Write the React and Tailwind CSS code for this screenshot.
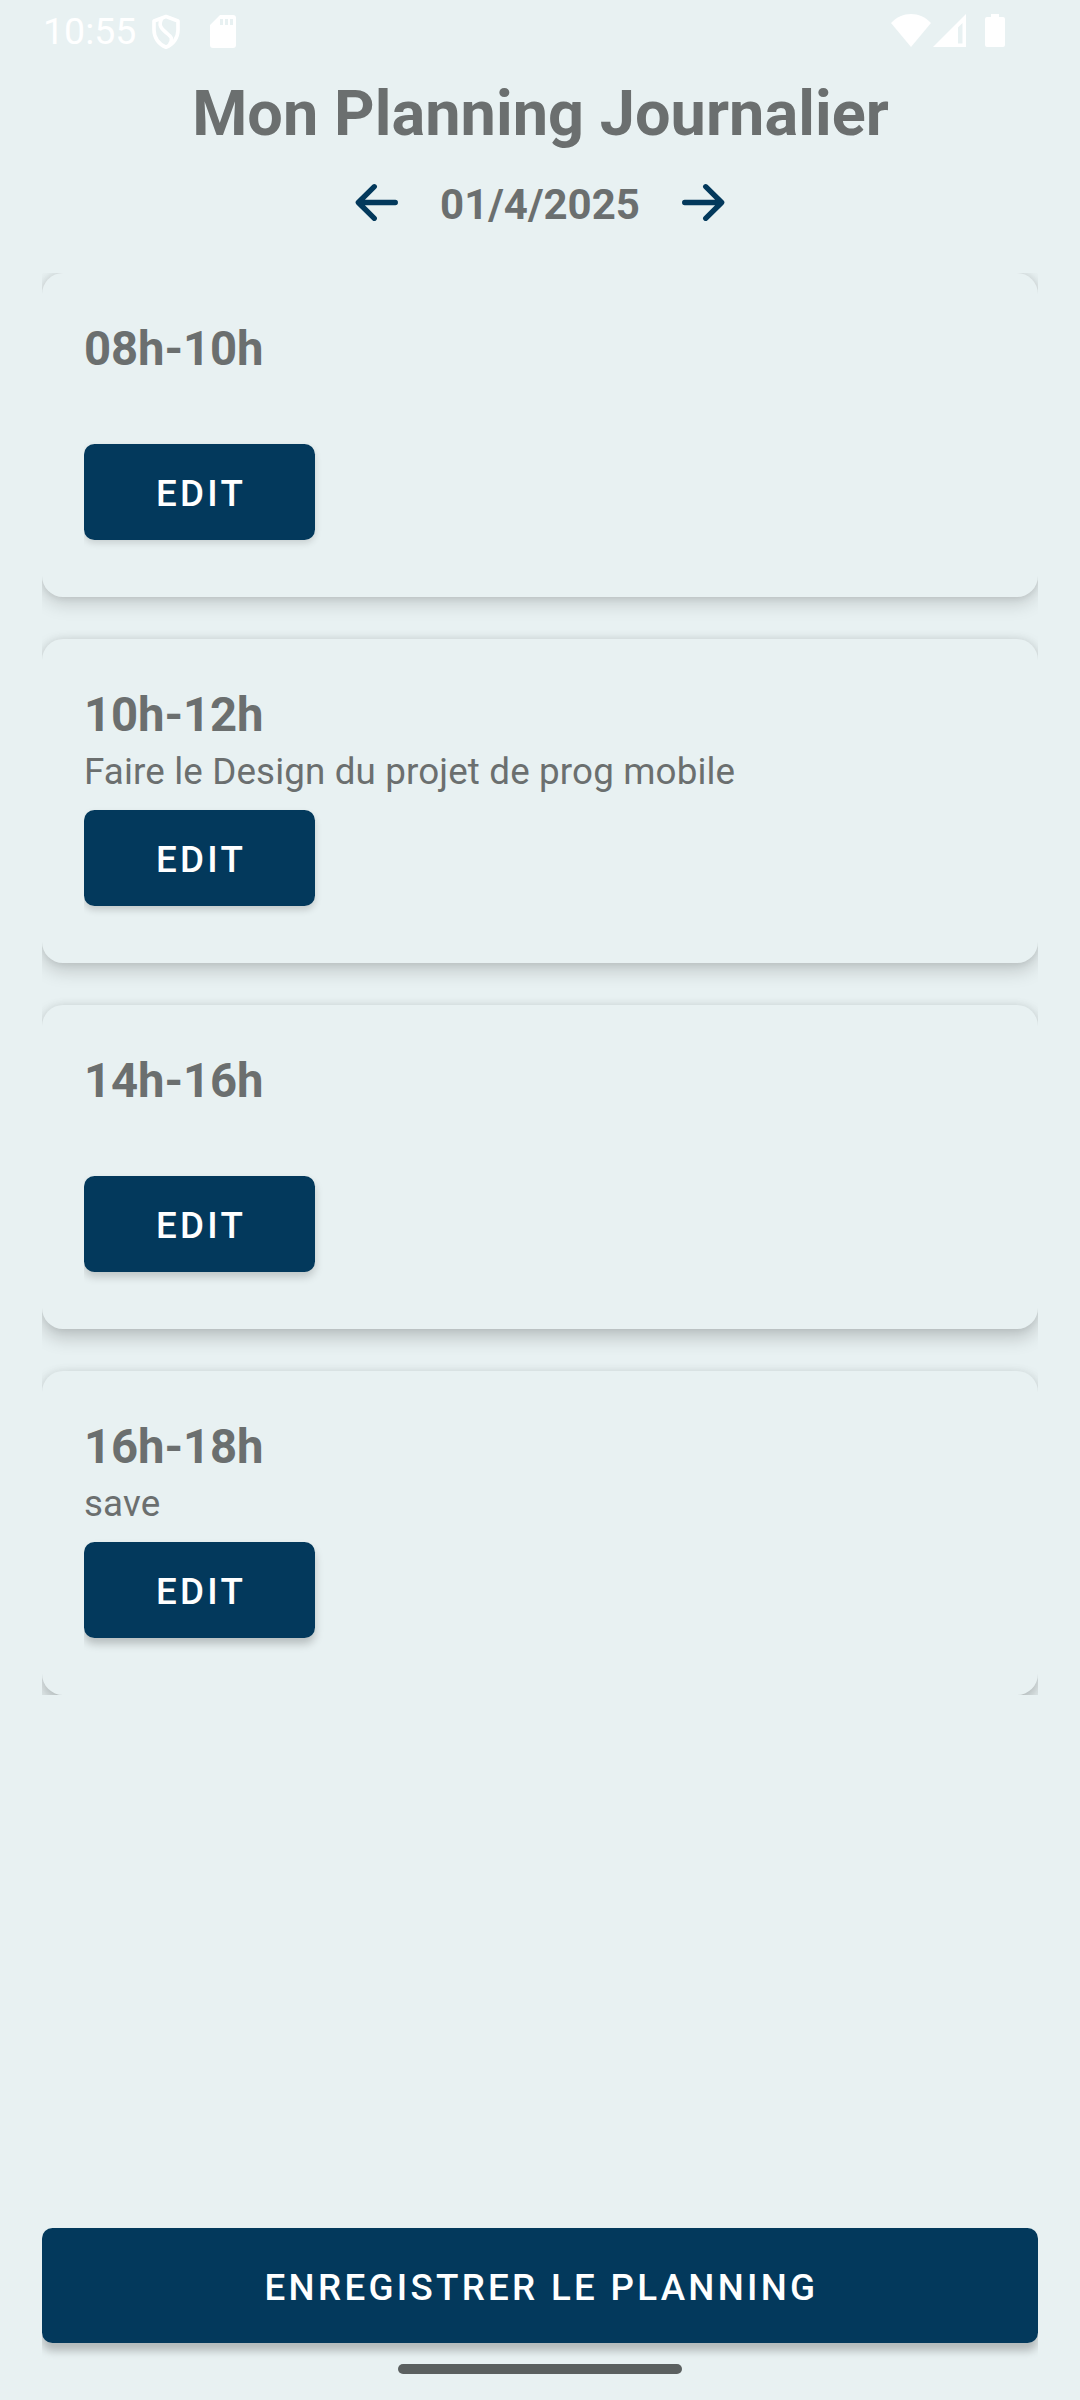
const slots = [
  { time: "08h-10h", task: "", card: "shadow-[0_7px_18px_rgba(0,0,0,0.15),0_0_8px_rgba(0,0,0,0.12)]", button: "shadow-[0_3px_7px_rgba(0,0,0,0.14)]" },
  { time: "10h-12h", task: "Faire le Design du projet de prog mobile", card: "shadow-[0_8px_18px_rgba(0,0,0,0.17),0_0_8px_rgba(0,0,0,0.1)]", button: "shadow-[0_4px_7px_rgba(0,0,0,0.16)]" },
  { time: "14h-16h", task: "", card: "shadow-[0_9px_18px_rgba(0,0,0,0.19),0_0_8px_rgba(0,0,0,0.09)]", button: "shadow-[0_5px_8px_rgba(0,0,0,0.18)]" },
  { time: "16h-18h", task: "save", card: "shadow-[0_10px_18px_rgba(0,0,0,0.21),0_0_8px_rgba(0,0,0,0.08)]", button: "shadow-[0_6px_8px_rgba(0,0,0,0.21)]" },
];

function Arrow({ flipped }) {
  return (
    <svg viewBox="0 0 63 63" className={flipped ? "h-[63px] w-[63px] -scale-x-100" : "h-[63px] w-[63px]"} fill="none" stroke="#03395c" strokeWidth="5.3" strokeLinecap="round" strokeLinejoin="round">
      <path d="M50.3 31.500H13.500M29.300 15.700L13.300 31.500L29.300 47.300" />
    </svg>
  );
}

function StatusBar() {
  return (
    <div className="flex h-[63px] items-start text-white">
      <span className="ml-[43px] mt-[9px] w-[108px] whitespace-nowrap text-[37.5px] leading-[44px]">10:55</span>
      <svg viewBox="0 0 30 36" className="mt-[13.5px] h-[36px] w-[30px]" fill="none" stroke="currentColor" strokeWidth="3.6" strokeLinejoin="round">
        <path d="M15 2.5L27 7v9c0 8-5 14.500-12 17.200C8 30.500 3 24 3 16V7z" />
        <path d="M11 4C7 11 10 14.500 15 18.500S22.500 24 18.500 30.500" />
      </svg>
      <svg viewBox="0 0 26 33" className="ml-[29px] mt-[15px] h-[33px] w-[26px]" fill="currentColor" fillRule="evenodd">
        <path d="M10 0h13a3 3 0 0 1 3 3v27a3 3 0 0 1-3 3H3a3 3 0 0 1-3-3V10zM10 4v6h3V4zM15 4v6h3V4zM20 4v6h3V4z" />
      </svg>
      <svg viewBox="0 0 40 33" className="ml-[655px] mt-[14px] h-[33px] w-[40px]" fill="currentColor">
        <path d="M0 9C11-3 29-3 40 9L20 33z" />
      </svg>
      <svg viewBox="0 0 33 33" className="ml-[2px] mt-[14px] h-[33px] w-[33px]" fill="currentColor" fillRule="evenodd">
        <path d="M33 0v33H0zM29.500 9L25 13.500V29.500H29.500z" />
      </svg>
      <svg viewBox="0 0 20 33" className="ml-[19px] mt-[14px] h-[33px] w-[20px]" fill="currentColor">
        <path d="M6 0h8v3h4a2 2 0 0 1 2 2v26a2 2 0 0 1-2 2H2a2 2 0 0 1-2-2V5a2 2 0 0 1 2-2h4z" />
      </svg>
    </div>
  );
}

function Slot({ time, task, card, button }) {
  return (
    <section className={`h-[324px] shrink-0 rounded-[21px] bg-[#e8f1f2] p-[42px] ${card}`}>
      <h2 className="h-[67px] text-[47.250px] font-bold leading-[69px] tracking-[-0.1px]">{time}</h2>
      <p className="mb-[15px] h-[47px] text-[36.750px] leading-[47px] tracking-[0.14px]">{task}</p>
      <div className="-mb-[20px] -mt-[10px] -mr-[20px] overflow-hidden pb-[20px] pt-[10px]">
        <button className={`block h-[96px] w-[231px] rounded-[10.500px] bg-[#03395c] pl-[3px] pt-[2px] text-center text-[36.750px] font-medium leading-[96px] tracking-[3.280px] text-white ${button}`}>EDIT</button>
      </div>
    </section>
  );
}

export default function App() {
  return (
    <main className="flex h-[2400px] w-[1080px] flex-col overflow-hidden bg-[#e8f1f2] font-['Roboto',sans-serif] text-[#6b6f6f]">
      <StatusBar />
      <h1 className="mt-[14px] h-[74px] pl-px text-center text-[63px] font-bold leading-[74px] tracking-[0.05px]">Mon Planning Journalier</h1>
      <div className="mt-[20px] flex h-[63px] items-center justify-center gap-[32px]">
        <Arrow />
        <span className="pt-[5px] text-[42px] font-bold leading-[50px]">01/4/2025</span>
        <Arrow flipped />
      </div>
      <div className="mx-[42px] mt-[39px] flex h-[1422px] flex-col gap-[42px] overflow-hidden">
        {slots.map((slot) => (
          <Slot key={slot.time} {...slot} />
        ))}
      </div>
      <div className="mx-[42px] mt-auto shrink-0 overflow-hidden pb-[25px] pt-[8px]">
        <button className="block h-[115px] w-full rounded-[10.500px] bg-[#03395c] pl-[3px] pt-[3px] text-center text-[36.750px] font-medium leading-[114px] tracking-[3.280px] text-white shadow-[0_8px_8px_rgba(0,0,0,0.23)]">ENREGISTRER LE PLANNING</button>
      </div>
      <div className="mx-auto mb-[26px] -mt-[4px] h-[10px] w-[284px] shrink-0 rounded-full bg-[#5b6060]" />
    </main>
  );
}
